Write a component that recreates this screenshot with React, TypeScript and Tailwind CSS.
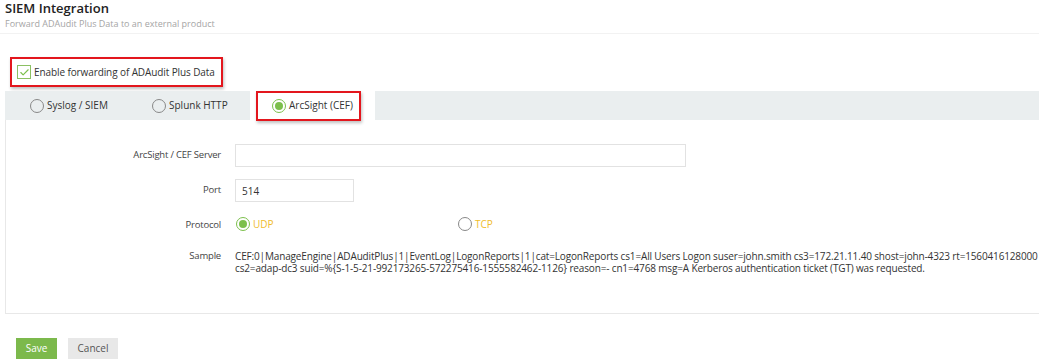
import { Check } from 'lucide-react'

interface RadioProps {
  label: string
  checked?: boolean
  labelClass?: string
}

function Radio({ label, checked, labelClass = 'text-[#333]' }: RadioProps) {
  return (
    <span className="flex items-center gap-[3px] whitespace-nowrap">
      {checked ? (
        <span className="flex h-[14px] w-[14px] items-center justify-center rounded-full border-[1.5px] border-[#7cbf4c]">
          <span className="h-[8px] w-[8px] rounded-full bg-[#7cbf4c]" />
        </span>
      ) : (
        <span className="h-[14px] w-[14px] rounded-full border-[1.5px] border-[#888]" />
      )}
      <span className={labelClass}>{label}</span>
    </span>
  )
}

function Label({ children, className = '' }: { children: React.ReactNode; className?: string }) {
  return (
    <span className={`w-[229px] shrink-0 pr-[14px] text-right text-[9.5px] tracking-[-0.2px] text-[#444] ${className}`}>
      {children}
    </span>
  )
}

export default function App() {
  return (
    <div className="h-[363px] w-full overflow-hidden bg-white font-['Open_Sans',sans-serif] text-[10px] text-[#333]">
      {/* Header */}
      <div className="border-b border-[#f2f2f2] px-[5px] pb-[3px]">
        <h1 className="text-[13px] font-semibold leading-[17px] text-[#222]">SIEM Integration</h1>
        <p className="text-[9px] leading-[13px] text-[#a5a5a5]">Forward ADAudit Plus Data to an external product</p>
      </div>

      {/* Enable forwarding */}
      <div className="ml-[10px] mt-[23px] flex h-[30px] w-[213px] items-center gap-[3px] whitespace-nowrap border-2 border-[#e3161d] pl-[5px] tracking-[-0.1px] shadow-[1px_2px_3px_rgba(0,0,0,0.25)]">
        <span className="flex h-[14px] w-[14px] items-center justify-center border border-[#8cc063] bg-white">
          <Check className="h-[11px] w-[11px] text-[#7cbf4c]" strokeWidth={2.5} />
        </span>
        <span>Enable forwarding of ADAudit Plus Data</span>
      </div>

      {/* Tabs + panel */}
      <div className="ml-[5px] mt-[4px] w-[1040px]">
        <div className="flex h-[29px] items-stretch bg-[#eaeeef]">
          <div className="flex w-[122px] items-center pl-[25px]">
            <Radio label="Syslog / SIEM" />
          </div>
          <div className="flex w-[123px] items-center pl-[25px]">
            <Radio label="Splunk HTTP" />
          </div>
          <div className="flex w-[125px] items-center bg-white pl-[6px]">
            <div className="flex h-[30px] w-[105px] items-center border-2 border-[#e3161d] pl-[14px] shadow-[1px_2px_3px_rgba(0,0,0,0.25)]">
              <Radio checked label="ArcSight (CEF)" />
            </div>
          </div>
        </div>

        <div className="h-[194px] border-b border-l border-[#e8e8e8] pt-[24px]">
          <div className="flex items-center">
            <Label>ArcSight / CEF Server</Label>
            <input className="h-[23px] w-[451px] border border-[#e2e2e2] px-[6px] text-[10px] outline-none" />
          </div>

          <div className="mt-[12px] flex items-center">
            <Label>Port</Label>
            <input
              defaultValue="514"
              className="h-[23px] w-[119px] border border-[#e2e2e2] px-[6px] text-[10px] text-[#333] outline-none"
            />
          </div>

          <div className="mt-[12px] flex h-[20px] items-center">
            <Label className="pt-[3px]">Protocol</Label>
            <div className="flex pl-[1px]">
              <div className="w-[222px]">
                <Radio checked label="UDP" labelClass="text-[#f0bc2d]" />
              </div>
              <Radio label="TCP" labelClass="text-[#f0bc2d]" />
            </div>
          </div>

          <div className="mt-[16px] flex items-start leading-[12px]">
            <Label>Sample</Label>
            <div className="whitespace-nowrap text-[10px] tracking-[-0.15px]">
              <div>
                CEF:0|ManageEngine|ADAuditPlus|1|EventLog|LogonReports|1|cat=LogonReports cs1=All Users Logon suser=john.smith cs3=172.21.11.40 shost=john-4323 rt=1560416128000
              </div>
              <div>
                cs2=adap-dc3 suid=%{'{'}S-1-5-21-992173265-572275416-1555582462-1126{'}'} reason=- cn1=4768 msg=A Kerberos authentication ticket (TGT) was requested.
              </div>
            </div>
          </div>
        </div>
      </div>

      {/* Actions */}
      <div className="ml-[16px] mt-[24px] flex gap-[11px]">
        <button className="h-[21px] w-[41px] bg-[#7cb94c] text-[10px] text-white">Save</button>
        <button className="h-[21px] w-[50px] bg-[#e8e8e8] text-[10px] text-[#555]">Cancel</button>
      </div>
    </div>
  )
}
